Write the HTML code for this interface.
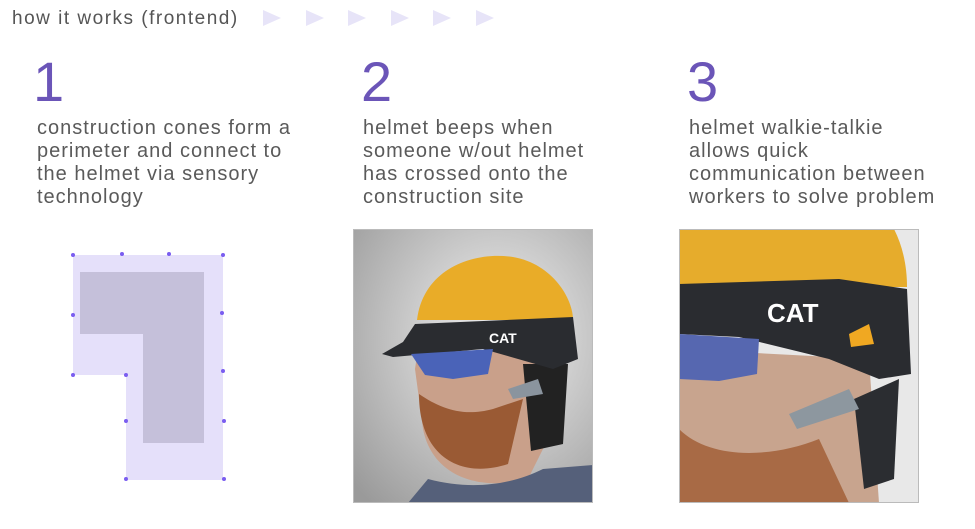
<!DOCTYPE html>
<html><head><style>
body{margin:0;width:975px;height:529px;background:#fff;position:relative;overflow:hidden;font-family:"Liberation Sans",sans-serif;color:#595959}
.h{position:absolute;left:12px;top:8px;font-size:19px;letter-spacing:1.5px;color:#555}
.n{position:absolute;top:52px;font-size:56px;color:#6b55b8;font-weight:300;line-height:60px}
.t{position:absolute;top:117px;font-size:20px;letter-spacing:1px;line-height:23px;color:#5a5a5a;width:320px;white-space:nowrap}
.tri{position:absolute;top:10px;width:0;height:0;border-top:8px solid transparent;border-bottom:8px solid transparent;border-left:18px solid #e7e4f8}
svg{position:absolute}
</style></head><body>
<div class="h">how it works (frontend)</div>
<div class="tri" style="left:263px"></div><div class="tri" style="left:306px"></div><div class="tri" style="left:348px"></div><div class="tri" style="left:391px"></div><div class="tri" style="left:433px"></div><div class="tri" style="left:476px"></div>
<div class="n" style="left:33px">1</div><div class="n" style="left:361px">2</div><div class="n" style="left:687px">3</div>
<div class="t" style="left:37px">construction cones form a<br>perimeter and connect to<br>the helmet via sensory<br>technology</div>
<div class="t" style="left:363px">helmet beeps when<br>someone w/out helmet<br>has crossed onto the<br>construction site</div>
<div class="t" style="left:689px">helmet walkie-talkie<br>allows quick<br>communication between<br>workers to solve problem</div>
<svg style="left:0;top:0" width="975" height="529">
<polygon points="73,255 223,255 223,480 126,480 126,375 73,375" fill="#e5e0fa"/>
<polygon points="80,272 204,272 204,443 143,443 143,334 80,334" fill="#c5c0da"/>
<g fill="#7a5df0">
<circle cx="73" cy="255" r="2"/><circle cx="122" cy="254" r="2"/><circle cx="169" cy="254" r="2"/><circle cx="223" cy="255" r="2"/><circle cx="73" cy="315" r="2"/><circle cx="222" cy="313" r="2"/><circle cx="73" cy="375" r="2"/><circle cx="126" cy="375" r="2"/><circle cx="223" cy="371" r="2"/><circle cx="126" cy="421" r="2"/><circle cx="224" cy="421" r="2"/><circle cx="126" cy="479" r="2"/><circle cx="224" cy="479" r="2"/>
</g>
</svg>
<svg style="left:353px;top:229px" width="240" height="274" viewBox="0 0 240 274">
<defs><radialGradient id="bg" cx="0.6" cy="0.4" r="0.8"><stop offset="0" stop-color="#f2f2f2"/><stop offset="1" stop-color="#9a9a9a"/></radialGradient></defs>
<rect width="240" height="274" fill="url(#bg)"/>
<path d="M62,140 L70,200 C80,250 130,262 175,250 L200,200 L195,125 L65,120 Z" fill="#c9a08a"/>
<path d="M66,165 C66,230 110,250 155,235 L170,170 L140,180 C110,188 88,180 66,165Z" fill="#9a5a34"/>
<path d="M55,274 L75,250 C120,262 160,255 190,240 L240,236 L240,274Z" fill="#55607a"/>
<path d="M170,135 L215,135 L210,215 L178,222Z" fill="#222"/>
<path d="M64,91 C70,40 120,22 160,28 C200,35 220,70 220,91Z" fill="#e9ac28"/>
<path d="M29,125 L50,113 L62,95 L220,88 L225,130 L200,140 L130,120 L40,128Z" fill="#2a2c30"/>
<text x="136" y="114" font-size="14" font-weight="bold" fill="#fff" font-family="Liberation Sans">CAT</text>
<path d="M58,125 L140,120 L135,145 L100,150 L72,146 Z" fill="#4a63b8"/>
<path d="M155,160 L185,150 L190,165 L160,170Z" fill="#8a949e"/>
<rect x="0.5" y="0.5" width="239" height="273" fill="none" stroke="#bbb"/>
</svg>
<svg style="left:679px;top:229px" width="240" height="274" viewBox="0 0 240 274">
<rect width="240" height="274" fill="#e8e8e8"/>
<path d="M0,120 L190,130 L200,274 L0,274Z" fill="#c8a48e"/>
<path d="M0,200 C30,230 90,230 140,210 L170,274 L0,274Z" fill="#a86a45"/>
<path d="M175,170 L220,150 L215,250 L185,260Z" fill="#2b2d31"/>
<path d="M0,0 L215,0 C225,20 228,40 228,58 L0,58Z" fill="#e6ac2c"/>
<path d="M0,55 L160,50 L228,60 L232,145 L200,150 L150,130 L60,108 L0,105Z" fill="#2a2c30"/>
<text x="88" y="93" font-size="26" font-weight="bold" fill="#fff" font-family="Liberation Sans">CAT</text>
<path d="M0,105 L80,110 L78,145 L40,152 L0,150Z" fill="#5667b0"/>
<path d="M110,185 L170,160 L180,180 L118,200Z" fill="#8d979f"/>
<path d="M170,105 L190,95 L195,115 L172,118Z" fill="#f0a822"/>
<rect x="0.5" y="0.5" width="239" height="273" fill="none" stroke="#bbb"/>
</svg>
</body></html>
